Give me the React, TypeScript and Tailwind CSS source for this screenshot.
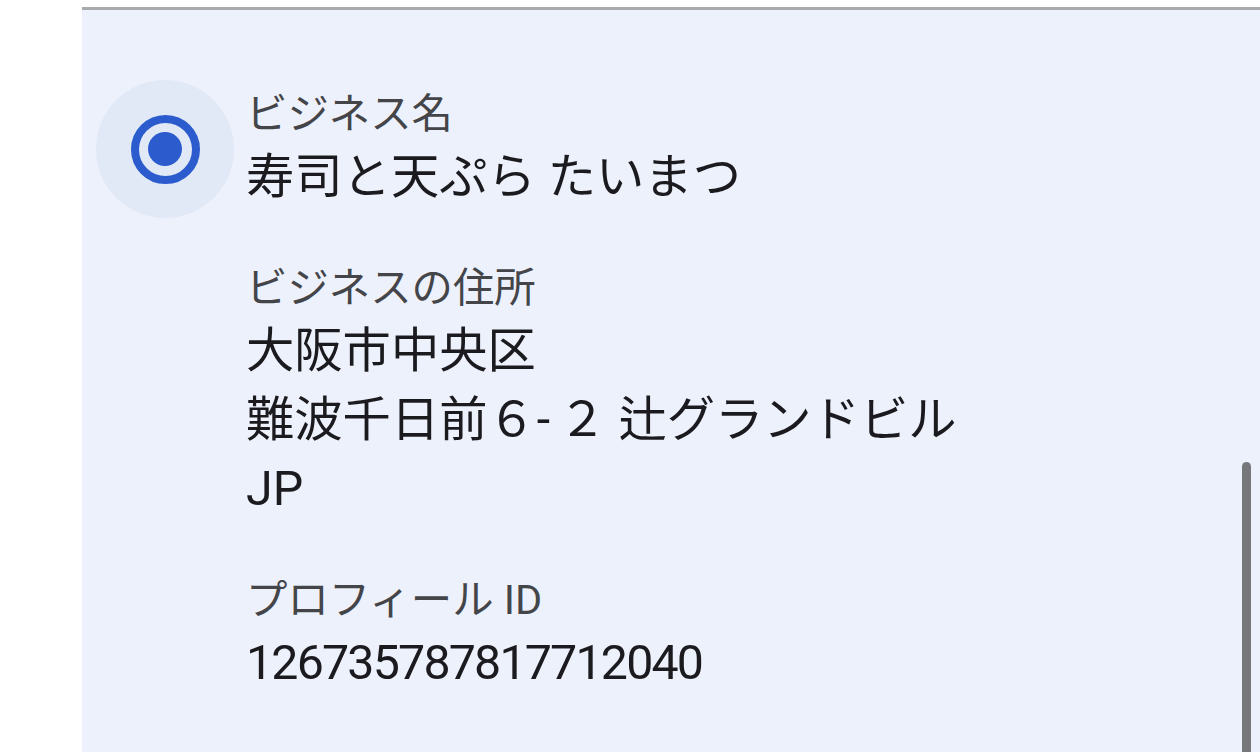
const font = "font-['Roboto','Noto_Sans_CJK_JP',sans-serif]";

function Field({ label, children }: { label: string; children: React.ReactNode }) {
  return (
    <div className="flex flex-col">
      <div className="text-[41.4px] leading-[55px] text-[#444549]">{label}</div>
      {children}
    </div>
  );
}

const value = 'text-[48.3px] leading-[69px] text-[#1b1b1f] whitespace-nowrap';

export default function App() {
  return (
    <div className={`h-[752px] w-[1260px] overflow-hidden bg-white ${font}`}>
      <div className="h-[7px]" />
      <div className="relative ml-[82px] flex h-[745px] items-start border-t-[3px] border-[#a9aaab] bg-[#edf1fc]">
        {/* radio */}
        <div className="ml-[14px] mt-[70px] flex h-[138px] w-[138px] shrink-0 items-center justify-center rounded-full bg-[#e1e8f6]">
          <div className="flex h-[69px] w-[69px] items-center justify-center rounded-full border-[8px] border-[#2b5bcd]">
            <div className="h-[34px] w-[34px] rounded-full bg-[#2b5bcd]" />
          </div>
        </div>

        <div className="ml-[12px] mt-[77px] flex flex-col gap-[50px]">
          <Field label="ビジネス名">
            <div className={value}>寿司と天ぷら たいまつ</div>
          </Field>
          <Field label="ビジネスの住所">
            <div className={value}>大阪市中央区</div>
            <div className={value}>
              難波千日前６<span className="pl-[1px] pr-[8px]">-</span>２ 辻グランドビル
            </div>
            <div className={value}>JP</div>
          </Field>
          <Field label="プロフィール ID">
            <div className={value + ' tracking-[-1.8px]'}>126735787817712040</div>
          </Field>
        </div>

        {/* scrollbar */}
        <div className="absolute bottom-0 right-[9px] top-[452px] w-[9px] rounded-t-full bg-[#75777b]" />
      </div>
    </div>
  );
}
